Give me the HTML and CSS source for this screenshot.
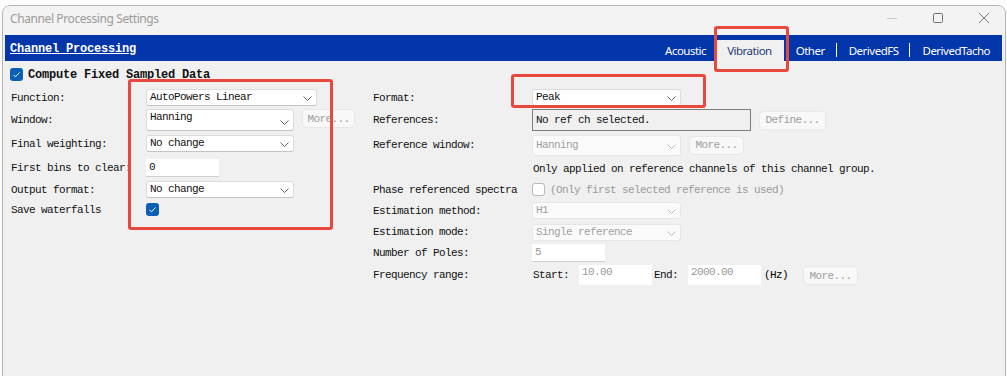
FILE: index.html
```html
<!DOCTYPE html>
<html>
<head>
<meta charset="utf-8">
<link rel="stylesheet" href="styles.css">
</head>
<body>
<div class="window">
  <div class="titlebar">
    <span class="title">Channel Processing Settings</span>
    <div class="winctl">
      <svg class="ctl min" width="12" height="12" viewBox="0 0 12 12"><path d="M1 6.5h10" stroke="#c9c9c9" stroke-width="1"/></svg>
      <svg class="ctl" width="12" height="12" viewBox="0 0 12 12"><rect x="1.5" y="1.5" width="9" height="9" rx="1" fill="none" stroke="#6f6f6f" stroke-width="1"/></svg>
      <svg class="ctl" width="12" height="12" viewBox="0 0 12 12"><path d="M1 1L11 11M11 1L1 11" stroke="#7a7a7a" stroke-width="1"/></svg>
    </div>
  </div>
  <div class="bluebar">
    <span class="bartitle">Channel Processing</span>
    <div class="tabs">
      <span class="tab">Acoustic</span>
      <span class="tab active">Vibration</span>
      <span class="tab">Other</span>
      <span class="sep"></span>
      <span class="tab">DerivedFS</span>
      <span class="sep"></span>
      <span class="tab">DerivedTacho</span>
    </div>
  </div>
  <div class="content">
    <div class="compute">
      <span class="check on"><svg width="13" height="13" viewBox="0 0 13 13"><path d="M3.5 6.8l2 2 4-4.3" fill="none" stroke="#fff" stroke-width="1"/></svg></span>
      <span class="bold">Compute Fixed Sampled Data</span>
    </div>
    <div class="columns">
      <div class="grid left">
        <span class="lbl">Function:</span>
        <div class="cell"><div class="combo w171"><span>AutoPowers Linear</span><svg class="chev" width="9" height="5" viewBox="0 0 9 5"><path d="M0.5 0.5l4 4 4-4" fill="none" stroke="#606060"/></svg></div></div>

        <span class="lbl">Window:</span>
        <div class="cell"><div class="combo w148 tall"><span>Hanning</span><svg class="chev" width="9" height="5" viewBox="0 0 9 5"><path d="M0.5 0.5l4 4 4-4" fill="none" stroke="#606060"/></svg></div><span class="btn more1">More...</span></div>

        <span class="lbl">Final weighting:</span>
        <div class="cell"><div class="combo w148"><span>No change</span><svg class="chev" width="9" height="5" viewBox="0 0 9 5"><path d="M0.5 0.5l4 4 4-4" fill="none" stroke="#606060"/></svg></div></div>

        <span class="lbl">First bins to clear:</span>
        <div class="cell"><div class="input w73">0</div></div>

        <span class="lbl">Output format:</span>
        <div class="cell"><div class="combo w148"><span>No change</span><svg class="chev" width="9" height="5" viewBox="0 0 9 5"><path d="M0.5 0.5l4 4 4-4" fill="none" stroke="#606060"/></svg></div></div>

        <span class="lbl">Save waterfalls</span>
        <div class="cell"><span class="check on"><svg width="13" height="13" viewBox="0 0 13 13"><path d="M3.5 6.8l2 2 4-4.3" fill="none" stroke="#fff" stroke-width="1"/></svg></span></div>
      </div>

      <div class="grid right">
        <span class="lbl">Format:</span>
        <div class="cell"><div class="combo w149"><span>Peak</span><svg class="chev" width="9" height="5" viewBox="0 0 9 5"><path d="M0.5 0.5l4 4 4-4" fill="none" stroke="#606060"/></svg></div></div>

        <span class="lbl">References:</span>
        <div class="cell"><div class="refbox">No ref ch selected.</div><span class="btn define">Define...</span></div>

        <span class="lbl">Reference window:</span>
        <div class="cell"><div class="combo w149 dis refwin"><span>Hanning</span><svg class="chev" width="9" height="5" viewBox="0 0 9 5"><path d="M0.5 0.5l4 4 4-4" fill="none" stroke="#bdbdbd"/></svg></div><span class="btn more2">More...</span></div>

        <span class="lbl"></span>
        <div class="cell"><span class="note">Only applied on reference channels of this channel group.</span></div>

        <span class="lbl">Phase referenced spectra</span>
        <div class="cell"><span class="check off"></span><span class="gray">(Only first selected reference is used)</span></div>

        <span class="lbl">Estimation method:</span>
        <div class="cell"><div class="combo w149 dis"><span>H1</span><svg class="chev" width="9" height="5" viewBox="0 0 9 5"><path d="M0.5 0.5l4 4 4-4" fill="none" stroke="#bdbdbd"/></svg></div></div>

        <span class="lbl">Estimation mode:</span>
        <div class="cell"><div class="combo w149 dis"><span>Single reference</span><svg class="chev" width="9" height="5" viewBox="0 0 9 5"><path d="M0.5 0.5l4 4 4-4" fill="none" stroke="#bdbdbd"/></svg></div></div>

        <span class="lbl">Number of Poles:</span>
        <div class="cell"><div class="input w73 gray">5</div></div>

        <span class="lbl">Frequency range:</span>
        <div class="cell freq"><span class="start">Start:</span><div class="input w73 fin gray">10.00</div><span class="end">End:</span><div class="input w73 fin gray">2000.00</div><span class="hz">(Hz)</span><span class="btn more3">More...</span></div>
      </div>
    </div>
  </div>
</div>
<div class="mark mark-left"></div>
<div class="mark mark-tab"></div>
<div class="mark mark-format"></div>
</body>
</html>
```

FILE: styles.css
```css
html, body {
  margin: 0;
  padding: 0;
  background: #fbfbfb;
  overflow: hidden;
}
body {
  width: 1007px;
  height: 376px;
  position: relative;
}
.window {
  margin: 5px 0 0 2px;
  width: 1002px;
  height: 380px;
  border: 1px solid #b5b5b5;
  border-radius: 8px 8px 0 0;
  background: #f0f0f0;
  box-sizing: content-box;
  overflow: hidden;
}
.titlebar {
  height: 29px;
  background: #f3f3f3;
  display: flex;
  align-items: center;
  justify-content: space-between;
  padding-left: 7px;
}
.title {
  font-family: "Noto Sans", sans-serif;
  font-size: 12px;
  letter-spacing: -0.4px;
  color: #9b9b9b;
  margin-top: -5px;
}
.winctl {
  display: flex;
  align-items: center;
  margin-top: -6px;
  margin-right: 15px;
  gap: 34px;
}
.bluebar {
  height: 26px;
  margin: 0 3px 0 2px;
  background: #0335ab;
  display: flex;
  align-items: stretch;
  justify-content: space-between;
}
.bartitle {
  font-family: "Liberation Mono", monospace;
  font-weight: bold;
  font-size: 12px;
  letter-spacing: -0.2px;
  color: #fff;
  text-decoration: underline;
  padding-left: 5px;
  align-self: center;
  margin-top: 2px;
}
.tabs {
  display: flex;
  align-items: stretch;
  padding-right: 1px;
  padding-top: 6px;
}
.tab {
  font-family: "Noto Sans", sans-serif;
  font-size: 11.5px;
  letter-spacing: -0.5px;
  color: #fff;
  padding: 0 11px 0 12px;
  display: flex;
  align-items: center;
  margin-top: -1px;
}
.tab.active {
  background: #f0f0f0;
  color: #1e3a78;
  padding: 0 12px 0 10px;
}
.sep {
  width: 1px;
  background: #fff;
  margin: 2px 0 4px;
}
.content {
  font-family: "Liberation Mono", monospace;
  font-size: 11px;
  letter-spacing: -0.6px;
  color: #111;
}
.compute {
  display: flex;
  align-items: center;
  gap: 5px;
  height: 13px;
  margin: 7px 0 0 7px;
}
.bold {
  font-weight: bold;
  font-size: 12px;
  letter-spacing: -0.2px;
}
.check {
  width: 13px;
  height: 13px;
  border-radius: 3px;
  box-sizing: border-box;
  display: inline-flex;
  flex: none;
}
.check.on {
  background: #0a5fb6;
}
.check.off {
  background: #fff;
  border: 1px solid #b9b9b9;
}
.columns {
  display: flex;
  margin-top: 6px;
}
.grid {
  display: grid;
  align-items: center;
}
.left {
  width: 362px;
  padding-left: 8px;
  grid-template-columns: 135px auto;
  grid-template-rows: 21px 24px 23px 25px 19px 21px;
}
.right {
  grid-template-columns: 159px auto;
  grid-template-rows: 21px 24px 26px 22px 19px 23px 20px 21px 24px;
}
.lbl {
  white-space: nowrap;
}
.cell {
  display: flex;
  align-items: center;
  white-space: nowrap;
}
.combo {
  height: 17px;
  background: #fff;
  border: 1px solid #dcdcdc;
  border-bottom-color: #c4c4c4;
  border-radius: 3px;
  box-sizing: border-box;
  display: flex;
  align-items: center;
  justify-content: space-between;
  padding: 0 4px 0 3px;
}
.combo span {
  margin-top: -1px;
}
.combo .chev {
  margin-top: 2px;
}
.combo.tall {
  height: 22px;
  align-items: flex-start;
  padding-top: 2px;
}
.combo.tall .chev {
  margin-top: 8px;
}
.combo.dis {
  background: #fafafa;
  border-color: #e6e6e6;
  color: #a0a0a0;
}
.combo.refwin {
  height: 21px;
}
.w171 { width: 171px; }
.w148 { width: 148px; }
.w149 { width: 149px; }
.w73 { width: 73px; }
.input {
  height: 18px;
  background: #fff;
  border-bottom: 1px solid #d0d0d0;
  box-sizing: border-box;
  padding: 0 3px;
  display: flex;
  align-items: center;
}
.input.fin {
  height: 20px;
  border-bottom: none;
  align-items: flex-start;
  padding-top: 1px;
}
.gray {
  color: #9a9a9a;
}
.btn {
  background: #f8f8f8;
  border: 1px solid #e8e8e8;
  border-radius: 4px;
  box-sizing: border-box;
  color: #9d9d9d;
  display: inline-flex;
  align-items: center;
  justify-content: center;
  height: 19px;
}
.more1 { width: 53px; margin-left: 8px; margin-top: -3px; }
.define { width: 67px; margin-left: 8px; }
.more2 { width: 55px; margin-left: 8px; }
.more3 { width: 55px; margin-left: 15px; }
.refbox {
  width: 219px;
  height: 22px;
  border: 1px solid #7c7c7c;
  box-sizing: border-box;
  padding: 0 3px;
  display: flex;
  align-items: center;
}
.note {
  padding-left: 1px;
}
.check.off + .gray {
  margin-left: 5px;
}
.start { margin-left: 1px; width: 46px; }
.end { margin-left: 2px; width: 34px; }
.hz { margin-left: 3px; color: #000; }
.freq .btn { margin-top: 1px; }
.mark {
  position: absolute;
  border: 3px solid #e8483e;
  border-radius: 3px;
  box-sizing: border-box;
}
.mark-left { left: 128px; top: 79px; width: 205px; height: 151px; }
.mark-tab { left: 714px; top: 26px; width: 75px; height: 46px; }
.mark-format { left: 511px; top: 74px; width: 195px; height: 34px; }
```
